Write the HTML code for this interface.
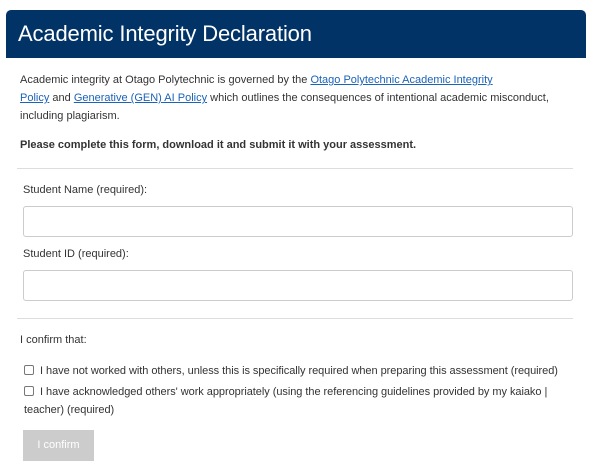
<!DOCTYPE html>
<html><head><style>
body{margin:0;background:#fff;font-family:"Liberation Sans",Arial,sans-serif;color:#333;width:600px;height:472px;overflow:hidden;position:relative}
.hd{position:absolute;left:6px;top:10px;width:580px;height:48px;background:#023366;border-radius:5px 5px 0 0}
.hd div{position:absolute;left:12px;top:11px;color:#fff;font-size:22px;letter-spacing:-0.15px}
.t{position:absolute;left:20px;font-size:11px;line-height:18px;white-space:nowrap}
a{color:#1a63b8;text-decoration:underline}
.hr{position:absolute;left:17px;width:556px;height:1px;background:#ddd}
.in{position:absolute;left:23px;width:548px;height:29px;border:1px solid #ccc;border-radius:3px}
.cb{display:inline-block;width:8px;height:8px;border:1px solid #777;border-radius:2px;vertical-align:-1px;margin-right:6px}
.btn{position:absolute;left:23px;top:430px;width:71px;height:31px;background:#ccc;color:#fff;font-size:11px;line-height:31px;text-align:center}
</style></head><body>
<div class="hd"><div>Academic Integrity Declaration</div></div>
<div class="t" style="top:71px">Academic integrity at Otago Polytechnic is governed by the <a>Otago Polytechnic Academic Integrity</a><br><a>Policy</a> and <a>Generative (GEN) AI Policy</a> which outlines the consequences of intentional academic misconduct,<br>including plagiarism.</div>
<div class="t" style="top:136px;font-weight:bold">Please complete this form, download it and submit it with your assessment.</div>
<div class="hr" style="top:168px"></div>
<div class="t" style="top:181px;left:23px">Student Name (required):</div>
<div class="in" style="top:206px"></div>
<div class="t" style="top:245px;left:23px">Student ID (required):</div>
<div class="in" style="top:270px"></div>
<div class="hr" style="top:318px"></div>
<div class="t" style="top:331px">I confirm that:</div>
<div class="t" style="top:362px;left:24px;letter-spacing:-0.05px"><span class="cb"></span>I have not worked with others, unless this is specifically required when preparing this assessment (required)</div>
<div class="t" style="top:383px;left:24px;letter-spacing:-0.05px"><span class="cb"></span>I have acknowledged others' work appropriately (using the referencing guidelines provided by my kaiako |<br>teacher) (required)</div>
<div class="btn">I confirm</div>
</body></html>
